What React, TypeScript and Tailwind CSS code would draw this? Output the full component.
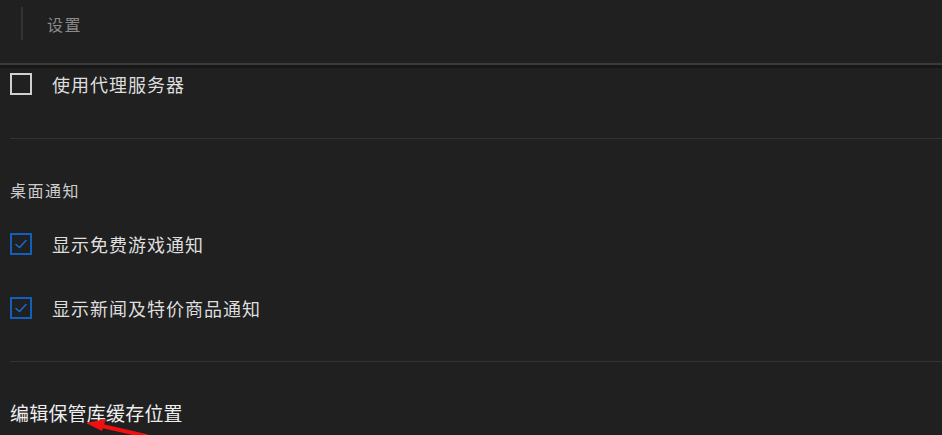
import React from "react";

function Box({ checked }: { checked?: boolean }) {
  return checked ? (
    <div className="w-[22px] h-[22px] border-2 border-[#1160c0] flex items-center justify-center shrink-0">
      <svg width="14" height="12" viewBox="0 0 14 12" fill="none">
        <path d="M2 6.5 L5.5 9.5 L12 2.5" stroke="#1a68d0" strokeWidth="1.6" strokeLinecap="round" strokeLinejoin="round" />
      </svg>
    </div>
  ) : (
    <div className="w-[22px] h-[22px] border-2 border-[#d0d0d0] shrink-0" />
  );
}

function Row({ label, checked }: { label: string; checked?: boolean }) {
  return (
    <div className="flex items-center gap-[20px] h-[36px]">
      <Box checked={checked} />
      <span className="text-[18px] tracking-[1px] text-[#dedede]">{label}</span>
    </div>
  );
}

export default function App() {
  return (
    <div
      className="w-[942px] h-[435px] bg-[#202020] overflow-hidden relative"
      style={{ fontFamily: '"Noto Sans CJK SC", "Noto Sans", sans-serif' }}
    >
      <div className="h-[65px] border-b-2 border-[#3a3a3a] flex items-center">
        <div className="ml-[21px] w-[2px] h-[33px] bg-[#333333] mb-[16px]" />
        <span className="ml-[24px] text-[16px] tracking-[1.5px] text-[#8a8a8a] mb-[16px]">设置</span>
      </div>
      <div className="h-[3px] bg-[#171717]" />
      <div className="pl-[10px]">
        <div className="-mt-[2px]">
          <Row label="使用代理服务器" />
        </div>
        <div className="mt-[36px] h-px bg-[#333333]" />
        <div className="mt-[39px] text-[16px] tracking-[1.5px] text-[#cccccc] leading-[24px]">桌面通知</div>
        <div className="mt-[24px]">
          <Row label="显示免费游戏通知" checked />
        </div>
        <div className="mt-[28px]">
          <Row label="显示新闻及特价商品通知" checked />
        </div>
        <div className="mt-[35px] h-px bg-[#333333]" />
        <div className="mt-[38px] text-[19px] tracking-[0.2px] text-[#eeeeee] leading-[26px]">编辑保管库缓存位置</div>
      </div>
      <svg className="absolute left-[80px] top-[414px]" width="80" height="24" viewBox="0 0 80 24">
        <path d="M66 22 L22 12" stroke="#f01010" strokeWidth="4" strokeLinecap="round" />
        <path d="M6 9 L26 5 L22 17 Z" fill="#f01010" />
      </svg>
    </div>
  );
}
